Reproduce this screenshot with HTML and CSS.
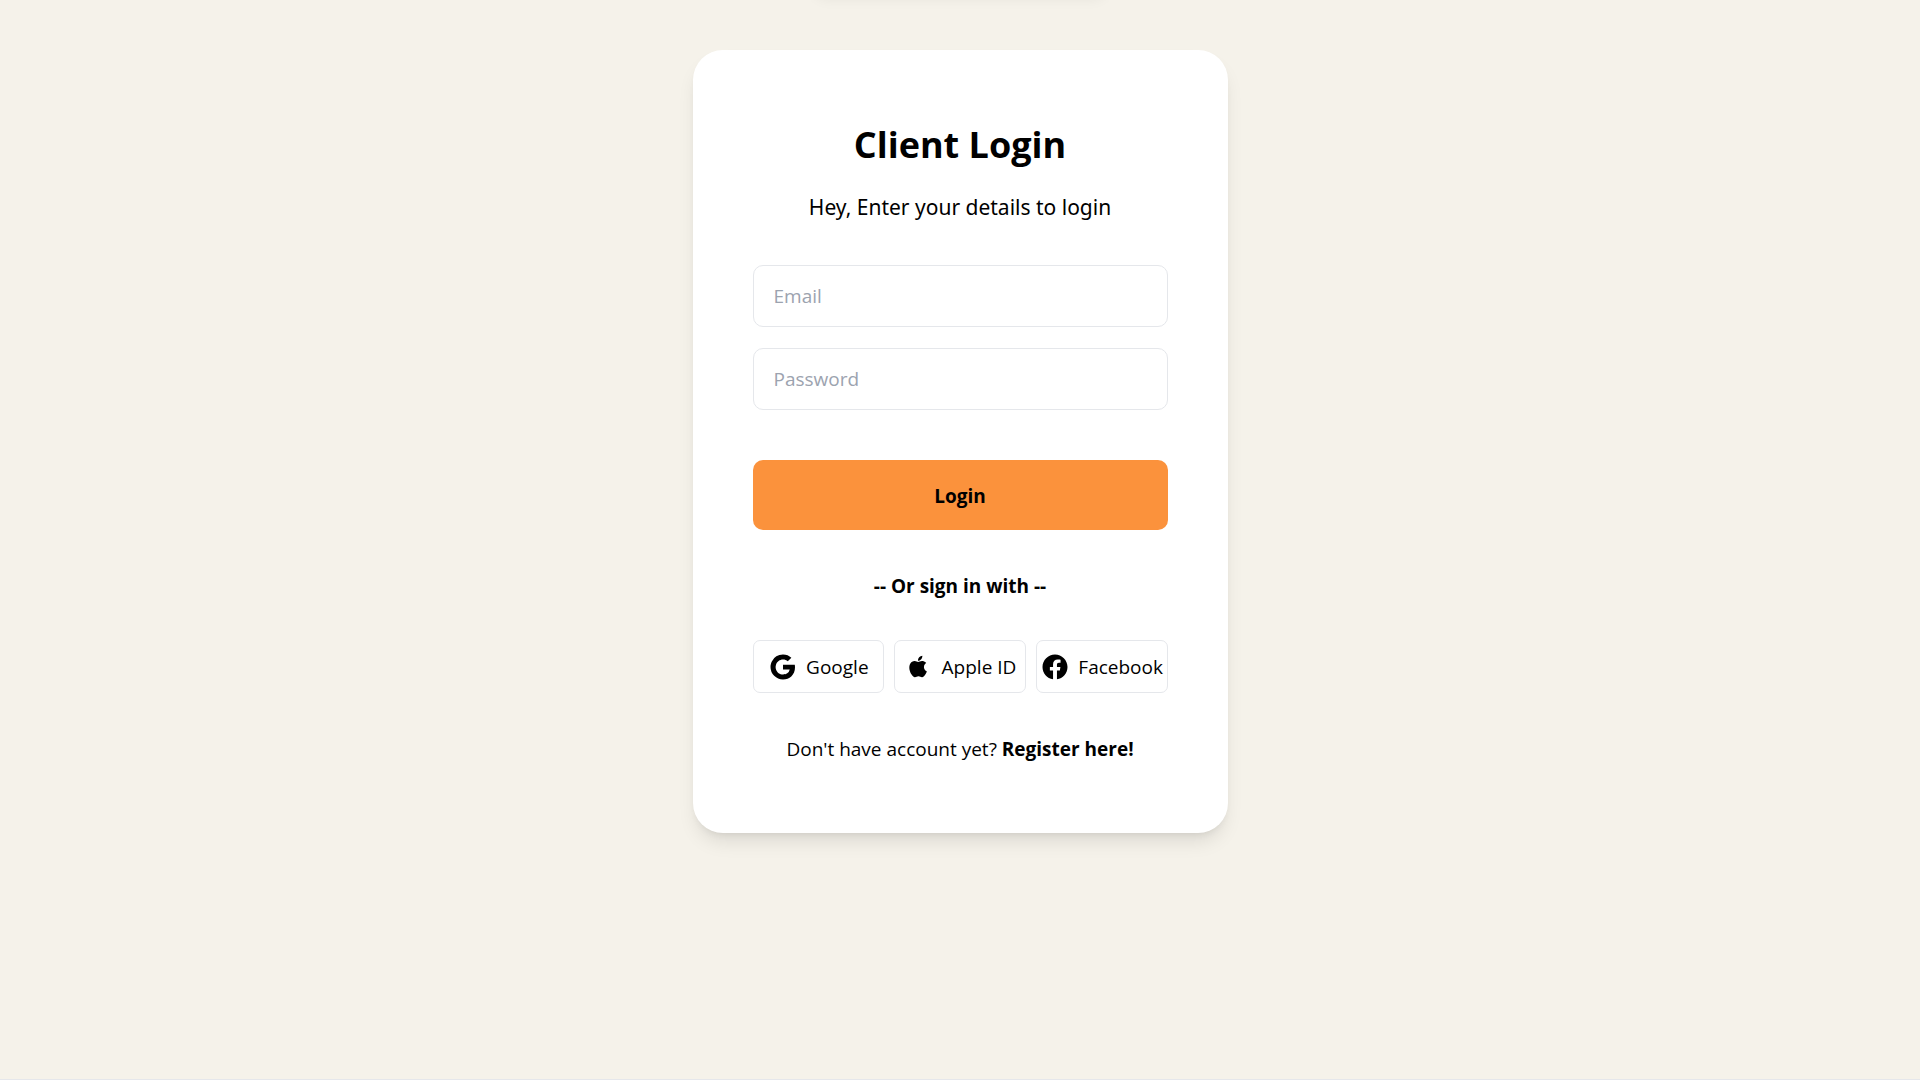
FILE: index.html
```html
<!DOCTYPE html>
<html lang="en">
<head>
<meta charset="utf-8">
<meta name="viewport" content="width=device-width, initial-scale=1">
<title>Client Login</title>
<link rel="stylesheet" href="styles.css">
</head>
<body>
<main class="page">
  <section class="card">
    <h1 class="title">Client Login</h1>
    <p class="subtitle">Hey, Enter your details to login</p>
    <form class="form">
      <input class="field" type="email" aria-label="Email" placeholder="Email">
      <input class="field" type="password" aria-label="Password" placeholder="Password">
      <button class="submit" type="submit">Login</button>
    </form>
    <p class="divider">-- Or sign in with --</p>
    <div class="providers">
      <button class="provider" type="button">
        <svg class="icon" viewBox="0 0 24 24" aria-hidden="true"><path d="M3.064 7.51A10 10 0 0 1 12 2c2.695 0 4.959.991 6.69 2.605l-2.867 2.868C14.786 6.482 13.468 5.977 12 5.977c-2.605 0-4.81 1.76-5.595 4.123-.2.6-.314 1.24-.314 1.9s.114 1.3.314 1.9c.786 2.364 2.99 4.123 5.595 4.123 1.345 0 2.49-.355 3.386-.955a4.6 4.6 0 0 0 1.996-3.018H12v-3.868h9.418c.118.654.182 1.336.182 2.045 0 3.046-1.09 5.61-2.982 7.35C16.964 21.105 14.7 22 12 22A9.996 9.996 0 0 1 2 12c0-1.614.386-3.14 1.064-4.49z"/></svg>
        <span>Google</span>
      </button>
      <button class="provider" type="button">
        <svg class="icon" viewBox="-3 -3 31 31" aria-hidden="true"><path d="M11.673 7.222c-.876 0-2.232-.996-3.66-.96-1.884.024-3.612 1.092-4.584 2.784-1.956 3.396-.504 8.412 1.404 11.172.936 1.344 2.04 2.856 3.504 2.808 1.404-.06 1.932-.912 3.636-.912 1.692 0 2.172.912 3.66.876 1.512-.024 2.472-1.368 3.396-2.724 1.068-1.56 1.512-3.072 1.536-3.156-.036-.012-2.94-1.128-2.976-4.488-.024-2.808 2.292-4.152 2.4-4.212-1.32-1.932-3.348-2.148-4.056-2.196-1.848-.144-3.396 1.008-4.26 1.008zm3.12-2.832c.78-.936 1.296-2.244 1.152-3.54-1.116.048-2.46.744-3.264 1.68-.72.828-1.344 2.16-1.176 3.432 1.236.096 2.508-.636 3.288-1.572z"/></svg>
        <span>Apple ID</span>
      </button>
      <button class="provider" type="button">
        <svg class="icon" viewBox="0 0 24 24" aria-hidden="true"><path d="M12 2C6.477 2 2 6.477 2 12c0 4.991 3.657 9.128 8.438 9.879V14.89h-2.54V12h2.54V9.797c0-2.506 1.492-3.89 3.777-3.89 1.094 0 2.238.195 2.238.195v2.46h-1.26c-1.243 0-1.63.771-1.63 1.562V12h2.773l-.443 2.89h-2.33v6.989C18.343 21.129 22 16.99 22 12c0-5.523-4.477-10-10-10z"/></svg>
        <span>Facebook</span>
      </button>
    </div>
    <p class="register">Don't have account yet? <a class="register-link" href="#">Register here!</a></p>
  </section>
</main>
</body>
</html>
```

FILE: styles.css
```css
* {
  box-sizing: border-box;
}

body {
  margin: 0;
  background: #f5f2ea;
  color: #000;
  font-family: "Segoe UI", "Open Sans", "Noto Sans", sans-serif;
  font-size: 19px;
  line-height: 30px;
}

.page {
  position: relative;
  min-height: 100vh;
  padding: 50px 20px;
  border-bottom: 1px solid #e5e7eb;
  overflow: hidden;
}

.page::before {
  content: "";
  position: absolute;
  top: -60px;
  left: 50%;
  width: 290px;
  height: 55px;
  margin-left: -145px;
  border-radius: 10px;
  box-shadow: 0 4px 14px rgba(0, 0, 0, 0.06);
}

.card {
  max-width: 535px;
  margin: 0 auto;
  padding: 70px 60px 69px;
  border-radius: 30px;
  background: #fff;
  box-shadow: 0 12px 19px -4px rgba(0, 0, 0, 0.1), 0 5px 8px -5px rgba(0, 0, 0, 0.1);
  text-align: center;
}

.title {
  margin: 0;
  font-size: 36px;
  font-weight: 700;
  line-height: 50px;
}

.subtitle {
  margin: 20px 0 40px;
  font-family: "Segoe UI", "Noto Sans", "Open Sans", sans-serif;
  font-size: 21px;
  line-height: 35px;
}

.form {
  display: flex;
  flex-direction: column;
  gap: 21px;
}

.field {
  width: 100%;
  height: 62px;
  padding: 0 20px;
  border: 1px solid #e5e7eb;
  border-radius: 10px;
  background: #fff;
  color: inherit;
  font: inherit;
}

.field::placeholder {
  color: #9ca3af;
  opacity: 1;
}

.submit {
  height: 70px;
  margin-top: 29px;
  padding: 2px 0 0;
  border: 0;
  border-radius: 10px;
  background: #fb923c;
  color: inherit;
  font: inherit;
  font-weight: 700;
}

.divider {
  margin: 41px 0 39px;
  font-weight: 700;
}

.providers {
  display: grid;
  grid-template-columns: repeat(3, minmax(0, 1fr));
  gap: 10px;
}

.provider {
  display: flex;
  align-items: center;
  justify-content: center;
  gap: 8px;
  height: 53px;
  padding: 0;
  border: 1px solid #e5e7eb;
  border-radius: 7px;
  background: #fff;
  color: inherit;
  font: inherit;
  white-space: nowrap;
}

.icon {
  flex: none;
  width: 30px;
  height: 30px;
  fill: currentColor;
}

.register {
  margin: 41px 0 0;
}

.register-link {
  color: inherit;
  font-weight: 700;
  text-decoration: none;
}
```
